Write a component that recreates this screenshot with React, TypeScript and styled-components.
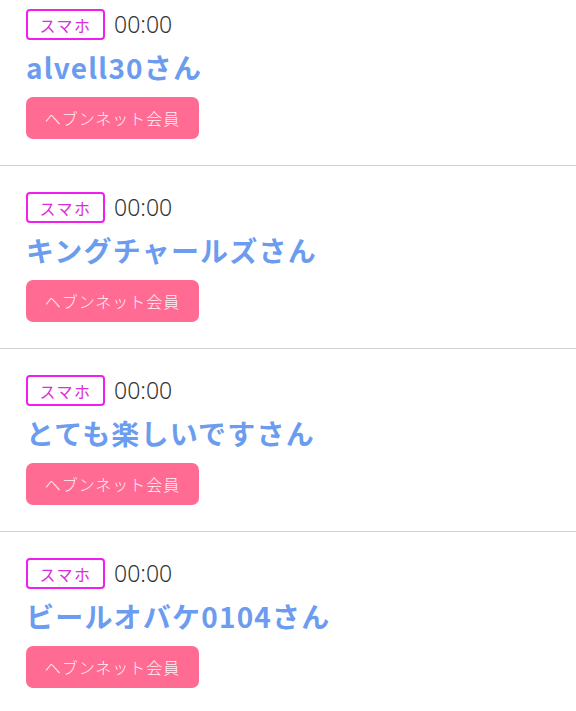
import React from "react";
import styled, { createGlobalStyle } from "styled-components";

const GlobalStyle = createGlobalStyle`
  html, body {
    margin: 0;
    padding: 0;
    background: #ffffff;
  }
  body {
    font-family: "Noto Sans CJK JP", "Noto Sans", sans-serif;
    -webkit-font-smoothing: antialiased;
  }
`;

const List = styled.ul`
  list-style: none;
  margin: 0;
  padding: 0;
  width: 100%;
`;

const Row = styled.li`
  display: flex;
  flex-direction: column;
  align-items: flex-start;
  padding: 26px 26px 26px;
  border-bottom: 1.5px solid #d2d2d2;
  /* the list is scrolled a little, the first row is cut at the top */
  &:first-child {
    padding-top: 9px;
  }
  &:last-child {
    border-bottom: none;
  }
`;

const MetaLine = styled.div`
  display: flex;
  align-items: center;
  gap: 9px;
  height: 31px;
`;

const DeviceBadge = styled.span`
  display: inline-flex;
  align-items: center;
  justify-content: center;
  box-sizing: border-box;
  height: 31px;
  width: 79px;
  border: 2px solid #f01ff0;
  border-radius: 4px;
  color: #d92fd9;
  font-size: 16px;
  letter-spacing: 1.5px;
  line-height: 1;
`;

const Time = styled.span`
  color: #333333;
  font-family: "Noto Sans", "Noto Sans CJK JP", sans-serif;
  font-size: 23px;
  font-weight: 300;
  line-height: 1;
`;

const Name = styled.div`
  margin-top: 7px;
  height: 40px;
  line-height: 40px;
  color: #6b9cef;
  font-size: 28px;
  font-weight: 600;
  letter-spacing: 1.2px;
  white-space: nowrap;
`;

const MemberButton = styled.button`
  margin-top: 10px;
  height: 42px;
  width: 173px;
  border: none;
  border-radius: 7px;
  background: #ff6b93;
  color: #fff2f6;
  font-family: "Noto Sans CJK JP", sans-serif;
  font-size: 16px;
  font-weight: 300;
  letter-spacing: 1px;
  cursor: pointer;
  padding: 0;
`;

type Visitor = {
  device: string;
  time: string;
  name: string;
  member: string;
};

const visitors: Visitor[] = [
  { device: "スマホ", time: "00:00", name: "alvell30さん", member: "ヘブンネット会員" },
  { device: "スマホ", time: "00:00", name: "キングチャールズさん", member: "ヘブンネット会員" },
  { device: "スマホ", time: "00:00", name: "とても楽しいですさん", member: "ヘブンネット会員" },
  { device: "スマホ", time: "00:00", name: "ビールオバケ0104さん", member: "ヘブンネット会員" },
];

export default function App() {
  return (
    <>
      <GlobalStyle />
      <List>
        {visitors.map((v, i) => (
          <Row key={i}>
            <MetaLine>
              <DeviceBadge>{v.device}</DeviceBadge>
              <Time>{v.time}</Time>
            </MetaLine>
            <Name>{v.name}</Name>
            <MemberButton>{v.member}</MemberButton>
          </Row>
        ))}
      </List>
    </>
  );
}
